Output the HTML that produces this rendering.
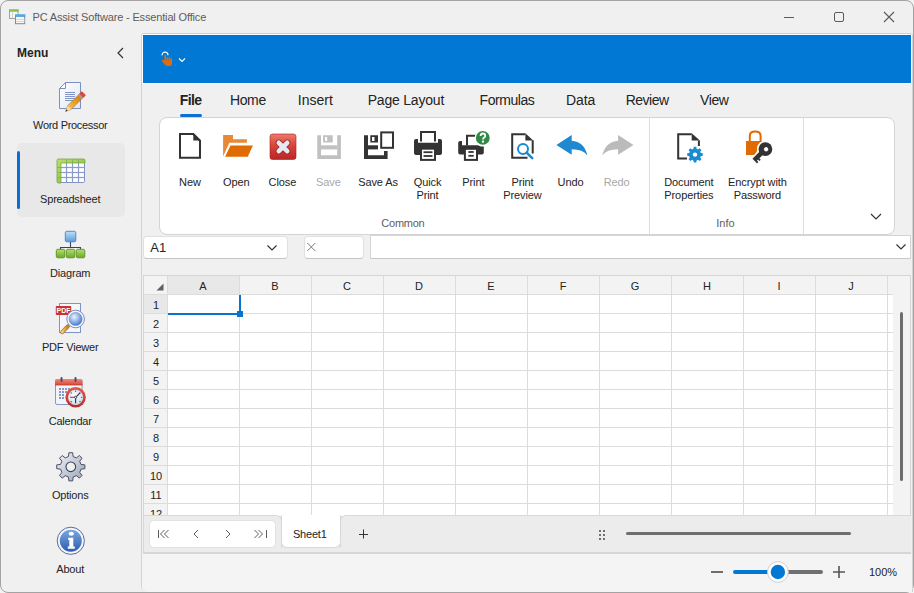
<!DOCTYPE html><html><head><meta charset="utf-8"><style>
html,body{margin:0;padding:0;width:914px;height:593px;overflow:hidden;background:#f2f2f2;}
body{position:relative;font-family:"Liberation Sans",sans-serif;}
.t{position:absolute;white-space:nowrap;}
svg{overflow:visible}
</style></head><body>
<div style="position:absolute;left:0px;top:0px;width:914px;height:593px;box-sizing:border-box;border:1px solid #a3a3a3;border-radius:8px;background:#f0f0f0;"></div>
<svg style="position:absolute;left:8px;top:8px" width="18" height="18" viewBox="0 0 18 18">
<defs><linearGradient id="tg1" x1="0" y1="0" x2="0" y2="1"><stop offset="0" stop-color="#a6d86a"/><stop offset="1" stop-color="#6cb030"/></linearGradient>
<linearGradient id="tg2" x1="0" y1="0" x2="0" y2="1"><stop offset="0" stop-color="#7cc4ec"/><stop offset="1" stop-color="#3a90cc"/></linearGradient></defs>
<rect x="1.5" y="1.5" width="8.5" height="9" fill="#f6f6f4" stroke="#a0a0a0" stroke-width="1"/>
<rect x="1" y="1" width="9.5" height="2.6" fill="url(#tg1)"/>
<line x1="4.5" y1="3.6" x2="4.5" y2="10" stroke="#d0d0d0" stroke-width="1"/>
<rect x="7.5" y="6.5" width="9.2" height="9.2" fill="#f6f6f4" stroke="#8a8a8a" stroke-width="1"/>
<rect x="7" y="6" width="10.2" height="2.8" fill="url(#tg2)"/>
<line x1="8" y1="11.5" x2="16.5" y2="11.5" stroke="#d8d8d8" stroke-width="1"/>
<line x1="8" y1="13.5" x2="16.5" y2="13.5" stroke="#d8d8d8" stroke-width="1"/>
</svg>
<div class="t" style="left:32.5px;top:11.54px;font-size:11px;line-height:11px;color:#5c5c5c;letter-spacing:-0.16px;">PC Assist Software - Essential Office</div>
<div style="position:absolute;left:784px;top:17px;width:10px;height:1px;background:#5a5a5a;"></div>
<div style="position:absolute;left:834px;top:12px;width:10px;height:10px;box-sizing:border-box;border:1px solid #5a5a5a;border-radius:2px;"></div>
<svg style="position:absolute;left:883px;top:11px" width="12" height="12" viewBox="0 0 12 12"><path d="M1 1 L11 11 M11 1 L1 11" stroke="#5a5a5a" stroke-width="1.1" fill="none"/></svg>
<div class="t" style="left:17px;top:46.68px;font-size:12px;line-height:12px;color:#232323;font-weight:700;">Menu</div>
<svg style="position:absolute;left:116px;top:47px" width="9" height="12" viewBox="0 0 9 12"><path d="M7 1 L2 6 L7 11" stroke="#333" stroke-width="1.2" fill="none"/></svg>
<div style="position:absolute;left:17px;top:143px;width:108px;height:74px;background:#e8e8e8;border-radius:5px;"></div>
<div style="position:absolute;left:17px;top:151px;width:3px;height:58px;background:#0a70d6;border-radius:2px;"></div>
<div class="t" style="left:10.20px;width:120px;text-align:center;top:119.54px;font-size:11px;line-height:11px;color:#232323;letter-spacing:-0.32px;">Word Processor</div>
<div class="t" style="left:10.20px;width:120px;text-align:center;top:193.54px;font-size:11px;line-height:11px;color:#232323;letter-spacing:-0.2px;">Spreadsheet</div>
<div class="t" style="left:10.20px;width:120px;text-align:center;top:267.54px;font-size:11px;line-height:11px;color:#232323;letter-spacing:-0.2px;">Diagram</div>
<div class="t" style="left:10.20px;width:120px;text-align:center;top:341.54px;font-size:11px;line-height:11px;color:#232323;letter-spacing:-0.2px;">PDF Viewer</div>
<div class="t" style="left:10.20px;width:120px;text-align:center;top:415.54px;font-size:11px;line-height:11px;color:#232323;letter-spacing:-0.2px;">Calendar</div>
<div class="t" style="left:10.20px;width:120px;text-align:center;top:489.54px;font-size:11px;line-height:11px;color:#232323;letter-spacing:-0.2px;">Options</div>
<div class="t" style="left:10.20px;width:120px;text-align:center;top:563.54px;font-size:11px;line-height:11px;color:#232323;letter-spacing:-0.2px;">About</div>
<svg style="position:absolute;left:52px;top:78px" width="40" height="38" viewBox="0 0 40 38">
<defs><linearGradient id="wpg" x1="0" y1="0" x2="1" y2="1"><stop offset="0" stop-color="#ffffff"/><stop offset="1" stop-color="#dfe6f3"/></linearGradient>
<linearGradient id="pen" x1="0" y1="0" x2="1" y2="0"><stop offset="0" stop-color="#f8d070"/><stop offset="0.5" stop-color="#f0a020"/><stop offset="1" stop-color="#c87010"/></linearGradient></defs>
<path d="M13.5 4.5 H28.5 V30.5 H7.5 V10.5 Z" fill="url(#wpg)" stroke="#7d90c4" stroke-width="1"/>
<path d="M7.5 10.5 L13.5 4.5 V10.5 Z" fill="#fff" stroke="#7d90c4" stroke-width="1"/>
<g stroke="#8496c8" stroke-width="1"><line x1="13" y1="14.5" x2="23" y2="14.5"/><line x1="13" y1="16.5" x2="23" y2="16.5"/><line x1="13" y1="18.5" x2="23" y2="18.5"/><line x1="13" y1="20.5" x2="23" y2="20.5"/><line x1="13" y1="22.5" x2="23" y2="22.5"/></g>
<g transform="translate(13.6,33.4) rotate(-45)">
<path d="M0 0 L5.5 -2.6 H25 V2.6 H5.5 Z" fill="url(#pen)" stroke="#9a6818" stroke-width="0.5"/>
<path d="M0 0 L5.5 -2.6 V2.6 Z" fill="#f3d9b0"/>
<path d="M0 0 L2 -0.95 V0.95 Z" fill="#333"/>
<rect x="20" y="-2.6" width="2.2" height="5.2" fill="#8aa0c8"/>
<rect x="22.2" y="-2.8" width="3.6" height="5.6" fill="#d84848" rx="0.8"/>
</g>
</svg>
<svg style="position:absolute;left:56px;top:158px" width="30" height="26" viewBox="0 0 30 26">
<defs><linearGradient id="ssg" x1="0" y1="0" x2="1" y2="1"><stop offset="0" stop-color="#b8e070"/><stop offset="1" stop-color="#84b840"/></linearGradient></defs>
<rect x="1.5" y="1.5" width="27" height="23" rx="1.2" fill="#fff" stroke="#8092c4" stroke-width="1"/>
<path d="M1 2.5 Q1 1 2.5 1 H27.5 Q29 1 29 2.5 V5 H5 V25 H2.5 Q1 25 1 23.5 Z" fill="url(#ssg)" stroke="#6c9e34" stroke-width="0.7"/>
<g stroke="#8a9ccc" stroke-width="1.2" fill="none">
<line x1="10.5" y1="5" x2="10.5" y2="24.5"/><line x1="16.5" y1="5" x2="16.5" y2="24.5"/><line x1="22.5" y1="5" x2="22.5" y2="24.5"/>
<line x1="5" y1="9.5" x2="28.5" y2="9.5"/><line x1="5" y1="14.5" x2="28.5" y2="14.5"/><line x1="5" y1="19.5" x2="28.5" y2="19.5"/>
</g>
<g stroke="#78a840" stroke-width="0.7"><line x1="10.5" y1="1.5" x2="10.5" y2="5"/><line x1="16.5" y1="1.5" x2="16.5" y2="5"/><line x1="22.5" y1="1.5" x2="22.5" y2="5"/>
<line x1="1.5" y1="9.5" x2="5" y2="9.5"/><line x1="1.5" y1="14.5" x2="5" y2="14.5"/><line x1="1.5" y1="19.5" x2="5" y2="19.5"/></g>
</svg>
<svg style="position:absolute;left:52px;top:228px" width="36" height="34" viewBox="0 0 36 34">
<defs><linearGradient id="dgb" x1="0" y1="0" x2="0" y2="1"><stop offset="0" stop-color="#bfe0fa"/><stop offset="1" stop-color="#5c9ad8"/></linearGradient>
<linearGradient id="dgg" x1="0" y1="0" x2="0" y2="1"><stop offset="0" stop-color="#b4e070"/><stop offset="1" stop-color="#6aa826"/></linearGradient></defs>
<rect x="13.3" y="3.3" width="10.5" height="10.5" rx="1.5" fill="url(#dgb)" stroke="#4a80c4" stroke-width="0.9"/>
<path d="M18.5 14 V20 M8.5 21.5 V19.5 H28.5 V21.5" stroke="#334466" stroke-width="1.1" fill="none"/>
<rect x="4.3" y="21.3" width="8.5" height="8.5" rx="1.5" fill="url(#dgg)" stroke="#5a9022" stroke-width="0.9"/>
<rect x="14.3" y="21.3" width="8.5" height="8.5" rx="1.5" fill="url(#dgg)" stroke="#5a9022" stroke-width="0.9"/>
<rect x="24.3" y="21.3" width="8.5" height="8.5" rx="1.5" fill="url(#dgg)" stroke="#5a9022" stroke-width="0.9"/>
</svg>
<svg style="position:absolute;left:52px;top:300px" width="36" height="36" viewBox="0 0 36 36">
<defs><radialGradient id="lens" cx="0.4" cy="0.35" r="0.7"><stop offset="0" stop-color="#eef4ff"/><stop offset="0.45" stop-color="#9cbcec"/><stop offset="1" stop-color="#3f74c8"/></radialGradient>
<linearGradient id="hdl" x1="0" y1="0" x2="1" y2="0"><stop offset="0" stop-color="#f4d27a"/><stop offset="1" stop-color="#c8801c"/></linearGradient></defs>
<rect x="7.5" y="3.5" width="21" height="29" fill="#f4f6fb" stroke="#8194c6" stroke-width="1"/>
<rect x="3.8" y="6" width="15.4" height="9" rx="1" fill="#c83232"/>
<text x="11.5" y="13.4" font-family="Liberation Sans" font-weight="700" font-size="7" fill="#fff" text-anchor="middle">PDF</text>
<path d="M10.2 32.2 L15.8 26.4" stroke="#b87020" stroke-width="4" stroke-linecap="round"/>
<path d="M10.2 32.2 L15.8 26.4" stroke="url(#hdl)" stroke-width="2.6" stroke-linecap="round"/>
<circle cx="23.6" cy="19" r="8.8" fill="#fbfcff" stroke="#7a88b8" stroke-width="1"/>
<circle cx="23.6" cy="19" r="6.6" fill="url(#lens)" stroke="#6a84c0" stroke-width="0.6"/>
</svg>
<svg style="position:absolute;left:52px;top:374px" width="36" height="36" viewBox="0 0 36 36">
<defs><radialGradient id="clk" cx="0.45" cy="0.4" r="0.6"><stop offset="0" stop-color="#ffffff"/><stop offset="1" stop-color="#cddcf0"/></radialGradient>
<linearGradient id="calh" x1="0" y1="0" x2="0" y2="1"><stop offset="0" stop-color="#f08a78"/><stop offset="1" stop-color="#d8483a"/></linearGradient>
<linearGradient id="ring" x1="0" y1="0" x2="0" y2="1"><stop offset="0" stop-color="#e8584a"/><stop offset="1" stop-color="#b82a24"/></linearGradient></defs>
<rect x="3.5" y="5.5" width="26.5" height="25" rx="1.5" fill="#f2f4fa" stroke="#8898c8" stroke-width="1"/>
<path d="M3 7 Q3 5 5 5 H28.5 Q30.5 5 30.5 7 V11 H3 Z" fill="url(#calh)"/>
<rect x="3" y="10.6" width="27.5" height="0.8" fill="#c04030"/>
<g fill="#8696c8"><rect x="7" y="14" width="2" height="2"/><rect x="10" y="14" width="2" height="2"/><rect x="13" y="14" width="2" height="2"/><rect x="16" y="14" width="2" height="2"/>
<rect x="7" y="17" width="2" height="2"/><rect x="10" y="17" width="2" height="2"/><rect x="13" y="17" width="2" height="2"/>
<rect x="7" y="20" width="2" height="2"/><rect x="10" y="20" width="2" height="2"/>
<rect x="7" y="23" width="2" height="2"/><rect x="10" y="23" width="2" height="2"/></g>
<rect x="8.5" y="3" width="2" height="5" rx="1" fill="#4a4f60" /><rect x="22.5" y="3" width="2" height="5" rx="1" fill="#4a4f60"/>
<circle cx="23.6" cy="23.3" r="10.2" fill="url(#ring)"/>
<circle cx="23.6" cy="23.3" r="7.6" fill="url(#clk)"/>
<g fill="#334"><circle cx="19.2" cy="18.9" r="0.6"/><circle cx="28" cy="18.9" r="0.6"/><circle cx="19.2" cy="27.7" r="0.6"/><circle cx="28" cy="27.7" r="0.6"/><circle cx="23.6" cy="17.2" r="0.6"/><circle cx="29.7" cy="23.3" r="0.6"/></g>
<path d="M23.6 23.3 L18 23.3" stroke="#d03030" stroke-width="1.1"/>
<path d="M23.6 23.3 V29.3 M23.6 23.3 L28 18.9" stroke="#2a3040" stroke-width="1.1"/>
<circle cx="23.6" cy="23.3" r="1.1" fill="#fff" stroke="#2a3040" stroke-width="0.8"/>
</svg>
<svg style="position:absolute;left:52px;top:448px" width="38" height="38" viewBox="0 0 38 38">
<defs><linearGradient id="gg" x1="0" y1="0" x2="1" y2="1"><stop offset="0" stop-color="#f0f2f6"/><stop offset="1" stop-color="#9aa4b8"/></linearGradient></defs>
<path d="M16.46 8.56 L16.89 4.73 L20.71 4.73 L21.14 8.56 L24.38 9.91 L27.40 7.50 L30.10 10.20 L27.69 13.22 L29.04 16.46 L32.87 16.89 L32.87 20.71 L29.04 21.14 L27.69 24.38 L30.10 27.40 L27.40 30.10 L24.38 27.69 L21.14 29.04 L20.71 32.87 L16.89 32.87 L16.46 29.04 L13.22 27.69 L10.20 30.10 L7.50 27.40 L9.91 24.38 L8.56 21.14 L4.73 20.71 L4.73 16.89 L8.56 16.46 L9.91 13.22 L7.50 10.20 L10.20 7.50 L13.22 9.91 Z" fill="url(#gg)" stroke="#4a5068" stroke-width="1" stroke-linejoin="round"/>
<circle cx="18.8" cy="18.8" r="4.8" fill="#f0f0f0" stroke="#3a4058" stroke-width="1.1"/>
</svg>
<svg style="position:absolute;left:52px;top:522px" width="38" height="38" viewBox="0 0 38 38">
<defs><linearGradient id="ib" x1="0" y1="0" x2="0" y2="1"><stop offset="0" stop-color="#7aa6e0"/><stop offset="1" stop-color="#2d5cb0"/></linearGradient></defs>
<circle cx="18.8" cy="18.8" r="13.6" fill="#f4f6fa" stroke="#5a6aa0" stroke-width="1"/>
<circle cx="18.8" cy="18.8" r="11" fill="url(#ib)"/>
<ellipse cx="19.3" cy="11.8" rx="2.6" ry="2" fill="#fff"/>
<path d="M16.2 15.8 H21.3 V24.5 H22.8 V26.8 H15.8 V24.5 H17.3 V18 H16.2 Z" fill="#fff"/>
</svg>
<div style="position:absolute;left:141px;top:33px;width:772px;height:559px;box-sizing:border-box;border:1px solid #d2d2d2;border-bottom:none;border-radius:3px 3px 0 6px;background:#f0f0f0;"></div>
<div style="position:absolute;left:142px;top:34px;width:770px;height:50px;background:#ffffff;border-radius:2px 2px 0 0;"></div>
<div style="position:absolute;left:143px;top:35px;width:768px;height:48px;background:#0078d4;"></div>
<svg style="position:absolute;left:155px;top:45px" width="35" height="25" viewBox="0 0 35 25">
<path d="M7 10.2 A3 3 0 0 1 13 10.2" stroke="#fff" stroke-width="1.2" fill="none"/>
<g fill="#e06a10">
<rect x="9.4" y="9.8" width="1.7" height="8" rx="0.85"/>
<rect x="11.6" y="12" width="1.5" height="6" rx="0.75"/>
<rect x="13.6" y="12" width="1.5" height="6" rx="0.75"/>
<rect x="15.5" y="13" width="1.5" height="6" rx="0.75"/>
<path d="M9.4 15 H17 V18.5 Q17 21 14.5 21 H12.2 Q11 21 10.2 20 L6.9 16.3 Q6.4 15.4 7.4 15.1 Q8.3 14.9 9.4 16 Z"/>
</g>
</svg>
<svg style="position:absolute;left:177px;top:56px" width="10" height="8" viewBox="0 0 10 8"><path d="M2 2.5 L5 5.5 L8 2.5" stroke="#fff" stroke-width="1.1" fill="none"/></svg>
<div class="t" style="left:179.8px;top:92.96px;font-size:14px;line-height:14px;color:#232323;font-weight:700;letter-spacing:-0.6px;">File</div>
<div style="position:absolute;left:180px;top:114px;width:22px;height:3px;background:#0a70d6;border-radius:2px;"></div>
<div class="t" style="left:229.9px;top:92.96px;font-size:14px;line-height:14px;color:#232323;letter-spacing:-0.35px;">Home</div>
<div class="t" style="left:297.8px;top:92.96px;font-size:14px;line-height:14px;color:#232323;">Insert</div>
<div class="t" style="left:367.7px;top:92.96px;font-size:14px;line-height:14px;color:#232323;letter-spacing:-0.2px;">Page Layout</div>
<div class="t" style="left:479.6px;top:92.96px;font-size:14px;line-height:14px;color:#232323;letter-spacing:-0.45px;">Formulas</div>
<div class="t" style="left:566px;top:92.96px;font-size:14px;line-height:14px;color:#232323;letter-spacing:-0.1px;">Data</div>
<div class="t" style="left:625.7px;top:92.96px;font-size:14px;line-height:14px;color:#232323;letter-spacing:-0.5px;">Review</div>
<div class="t" style="left:699.9px;top:92.96px;font-size:14px;line-height:14px;color:#232323;letter-spacing:-0.35px;">View</div>
<div style="position:absolute;left:159px;top:117px;width:736px;height:118px;box-sizing:border-box;background:#fff;border:1px solid #d4d4d4;border-radius:8px;"></div>
<div style="position:absolute;left:649px;top:118px;width:1px;height:116px;background:#dedede;"></div>
<div style="position:absolute;left:803px;top:118px;width:1px;height:116px;background:#dedede;"></div>
<div class="t" style="left:362.90px;width:80px;text-align:center;top:217.54px;font-size:11px;line-height:11px;color:#606060;letter-spacing:-0.25px;">Common</div>
<div class="t" style="left:705.40px;width:40px;text-align:center;top:217.54px;font-size:11px;line-height:11px;color:#606060;">Info</div>
<svg style="position:absolute;left:869px;top:211px" width="14" height="10" viewBox="0 0 14 10"><path d="M2 3 L7 8 L12 3" stroke="#333" stroke-width="1.2" fill="none"/></svg>
<div class="t" style="left:144.90px;width:90px;text-align:center;top:176.54px;font-size:11px;line-height:11px;color:#232323;letter-spacing:-0.1px;">New</div>
<div class="t" style="left:191.20px;width:90px;text-align:center;top:176.54px;font-size:11px;line-height:11px;color:#232323;letter-spacing:-0.1px;">Open</div>
<div class="t" style="left:237.40px;width:90px;text-align:center;top:176.54px;font-size:11px;line-height:11px;color:#232323;letter-spacing:-0.1px;">Close</div>
<div class="t" style="left:283.40px;width:90px;text-align:center;top:176.54px;font-size:11px;line-height:11px;color:#a8a8a8;letter-spacing:-0.1px;">Save</div>
<div class="t" style="left:333.00px;width:90px;text-align:center;top:176.54px;font-size:11px;line-height:11px;color:#232323;letter-spacing:-0.1px;">Save As</div>
<div class="t" style="left:382.50px;width:90px;text-align:center;top:176.54px;font-size:11px;line-height:11px;color:#232323;letter-spacing:-0.1px;">Quick</div>
<div class="t" style="left:382.50px;width:90px;text-align:center;top:189.54px;font-size:11px;line-height:11px;color:#232323;letter-spacing:-0.1px;">Print</div>
<div class="t" style="left:428.30px;width:90px;text-align:center;top:176.54px;font-size:11px;line-height:11px;color:#232323;letter-spacing:-0.1px;">Print</div>
<div class="t" style="left:477.50px;width:90px;text-align:center;top:176.54px;font-size:11px;line-height:11px;color:#232323;letter-spacing:-0.1px;">Print</div>
<div class="t" style="left:477.50px;width:90px;text-align:center;top:189.54px;font-size:11px;line-height:11px;color:#232323;letter-spacing:-0.1px;">Preview</div>
<div class="t" style="left:525.50px;width:90px;text-align:center;top:176.54px;font-size:11px;line-height:11px;color:#232323;letter-spacing:-0.1px;">Undo</div>
<div class="t" style="left:571.60px;width:90px;text-align:center;top:176.54px;font-size:11px;line-height:11px;color:#a8a8a8;letter-spacing:-0.1px;">Redo</div>
<div class="t" style="left:643.90px;width:90px;text-align:center;top:176.54px;font-size:11px;line-height:11px;color:#232323;letter-spacing:-0.1px;">Document</div>
<div class="t" style="left:643.90px;width:90px;text-align:center;top:189.54px;font-size:11px;line-height:11px;color:#232323;letter-spacing:-0.1px;">Properties</div>
<div class="t" style="left:712.40px;width:90px;text-align:center;top:176.54px;font-size:11px;line-height:11px;color:#232323;letter-spacing:-0.1px;">Encrypt with</div>
<div class="t" style="left:712.40px;width:90px;text-align:center;top:189.54px;font-size:11px;line-height:11px;color:#232323;letter-spacing:-0.1px;">Password</div>
<svg style="position:absolute;left:176px;top:130px" width="28" height="32" viewBox="0 0 28 32">
<path d="M4 4 H17.3 L24 10.7 V27.7 H4 Z" fill="#fff" stroke="#333" stroke-width="2" stroke-linejoin="miter"/>
<path d="M17.3 3 V10.4 H25 Z" fill="#333"/>
</svg>
<svg style="position:absolute;left:220px;top:130px" width="36" height="30" viewBox="0 0 36 30">
<path d="M3.1 5 H13 V9.2 H26.9 V12.8 H9.4 L3.3 26 H3.1 Z" fill="#e8893a"/>
<path d="M10.5 15.4 H32.9 L27.8 26.7 H5.1 Z" fill="#e06b00"/>
</svg>
<svg style="position:absolute;left:268px;top:132px" width="30" height="30" viewBox="0 0 30 30">
<defs><linearGradient id="cg" x1="0" y1="0" x2="0" y2="1"><stop offset="0" stop-color="#ec7a6c"/><stop offset="0.45" stop-color="#d9453a"/><stop offset="1" stop-color="#b92626"/></linearGradient></defs>
<rect x="2" y="2" width="26" height="25.5" rx="2.5" fill="url(#cg)" stroke="#a82020" stroke-width="0.6"/>
<path d="M10.8 10.8 L19.2 19.2 M19.2 10.8 L10.8 19.2" stroke="#a82a24" stroke-width="6.4" stroke-linecap="round"/>
<path d="M10.8 10.8 L19.2 19.2 M19.2 10.8 L10.8 19.2" stroke="#e4eaf4" stroke-width="4.6" stroke-linecap="round"/>
</svg>
<svg style="position:absolute;left:316px;top:134px" width="26" height="26" viewBox="0 0 26 26">
<path d="M1.3 1.2 H5 V21.2 H21.2 V1.2 H24.9 V25 H1.3 Z" fill="#c0c0c0"/>
<rect x="5" y="11.3" width="16.2" height="4.1" fill="#c0c0c0"/>
<path d="M7.1 1.2 H16.7 V8.6 H7.1 Z M9 3.1 V7 H11.2 V3.1 Z" fill="#c0c0c0" fill-rule="evenodd"/>
</svg>
<svg style="position:absolute;left:362px;top:130px" width="34" height="30" viewBox="0 0 34 30">
<path d="M2 5.2 H6 V25.2 H22 V21.1 H25.6 V29 H2 Z" fill="#333"/>
<rect x="6" y="15.3" width="10" height="4.1" fill="#333"/>
<path d="M8.3 5.2 H16 V12.6 H8.3 Z M10 7.1 V11 H12.5 V7.1 Z" fill="#333" fill-rule="evenodd"/>
<rect x="19.2" y="2.4" width="11.8" height="15.4" fill="#fff" stroke="#333" stroke-width="2"/>
</svg>
<svg style="position:absolute;left:412px;top:129px" width="32" height="34" viewBox="0 0 32 34">
<path d="M9 12.5 V3 H23 V12.5" fill="none" stroke="#333" stroke-width="2"/>
<path d="M4 10 H6 V13.8 H26 V10 H28 Q30 10 30 12 V24 Q30 26 28 26 H4 Q2 26 2 24 V12 Q2 10 4 10 Z" fill="#333"/>
<rect x="9" y="19.7" width="14" height="11.2" fill="#fff" stroke="#333" stroke-width="2"/>
<rect x="11.5" y="22.3" width="9" height="1.8" fill="#333"/><rect x="11.5" y="26.1" width="9" height="1.8" fill="#333"/>
</svg>
<svg style="position:absolute;left:456px;top:128px" width="36" height="36" viewBox="0 0 36 36">
<path d="M11 17.5 V7.7 H22.2" fill="none" stroke="#333" stroke-width="2"/>
<path d="M4.2 13.1 H6 V17.2 H22 L25 18.5 H27.8 V24.5 Q27.8 26.5 25.8 26.5 H4.2 Q2.2 26.5 2.2 24.5 V15.1 Q2.2 13.1 4.2 13.1 Z" fill="#333"/>
<rect x="8.9" y="20.8" width="12.1" height="11.1" fill="#fff" stroke="#333" stroke-width="2"/>
<rect x="12.4" y="23.1" width="5.3" height="1.8" fill="#333"/><rect x="12.4" y="26.9" width="5.3" height="1.8" fill="#333"/>
<circle cx="26.8" cy="9.9" r="8.1" fill="#fff"/>
<circle cx="26.8" cy="9.9" r="6.9" fill="#2f8a47"/>
<path d="M24.6 8.1 Q24.6 5.5 26.9 5.5 Q29.2 5.5 29.2 7.7 Q29.2 9.1 27.9 9.8 Q27 10.3 27 11.6" fill="none" stroke="#fff" stroke-width="1.8"/>
<rect x="26" y="12.6" width="2" height="2" fill="#fff"/>
</svg>
<svg style="position:absolute;left:508px;top:130px" width="28" height="32" viewBox="0 0 28 32">
<path d="M17.3 4.2 H4.2 V27.7 H19.5 M24.7 23.5 V10.2" fill="none" stroke="#333" stroke-width="2"/>
<path d="M17.4 3.2 V10.4 H25.2 Z" fill="#333"/>
<circle cx="15" cy="19" r="5" fill="none" stroke="#1a8ad4" stroke-width="2"/>
<path d="M18.6 22.6 L24.2 28.2" stroke="#1a8ad4" stroke-width="2.6" stroke-linecap="round"/>
</svg>
<svg style="position:absolute;left:554px;top:132px" width="36" height="26" viewBox="0 0 36 26">
<path d="M2.4 12.9 L17.7 3.1 V8.8 Q30 9.5 33.4 23.4 Q29 17.2 17.7 17.2 V22.8 Z" fill="#1e88d0"/>
</svg>
<svg style="position:absolute;left:600px;top:132px" width="36" height="26" viewBox="0 0 36 26">
<path d="M33.5 12.9 L18.1 3.1 V8.8 Q5.8 9.5 2.2 23.4 Q6.8 17.2 18.1 17.2 V22.8 Z" fill="#bbbbbb"/>
</svg>
<svg style="position:absolute;left:675px;top:130px" width="32" height="36" viewBox="0 0 32 36">
<path d="M16.7 4.2 H3.2 V28.5 H12 M23.9 16 V10.4" fill="none" stroke="#333" stroke-width="2"/>
<path d="M16.7 3.2 V10.4 H24.9 Z" fill="#333"/>
<path d="M18.40 18.82 L18.73 16.80 L21.27 16.80 L21.60 18.82 L22.96 19.38 L24.61 18.19 L26.41 19.99 L25.22 21.64 L25.78 23.00 L27.80 23.33 L27.80 25.87 L25.78 26.20 L25.22 27.56 L26.41 29.21 L24.61 31.01 L22.96 29.82 L21.60 30.38 L21.27 32.40 L18.73 32.40 L18.40 30.38 L17.04 29.82 L15.39 31.01 L13.59 29.21 L14.78 27.56 L14.22 26.20 L12.20 25.87 L12.20 23.33 L14.22 23.00 L14.78 21.64 L13.59 19.99 L15.39 18.19 L17.04 19.38 Z" fill="#1a8ad4" stroke="#fff" stroke-width="0"/>
<circle cx="20" cy="24.6" r="2.2" fill="#fff"/>
</svg>
<svg style="position:absolute;left:742px;top:128px" width="34" height="38" viewBox="0 0 34 38">
<path d="M7.8 13 V8 Q7.8 3.6 13.2 3.6 Q18.6 3.6 18.6 8 V13" fill="none" stroke="#e06b00" stroke-width="2"/>
<path d="M4 13 H20.4 V17.5 Q16 18 15 23 L12.6 26.9 H4 Z" fill="#e06b00"/>
<g transform="translate(23.4,21.1) rotate(135)">
<path d="M0 -7 A7 7 0 1 1 0 7 A7 7 0 1 1 0 -7 Z M3 -2.3 H16.5 V2.3 H3 Z M11 -2.3 V-4.3 H13 V-2.3 Z M14.3 -2.3 V-4.3 H16.5 V-2.3 Z" fill="#fff" stroke="#fff" stroke-width="3" stroke-linejoin="round"/>
<circle cx="0" cy="0" r="6.9" fill="#333"/>
<path d="M3 -2.3 H16 V2.3 H3 Z M10.8 -2.3 V-4.2 H12.6 V-2.3 Z M14.2 -2.3 V-4.2 H16 V-2.3 Z" fill="#333"/>
<circle cx="-0.4" cy="-0.6" r="2.2" fill="#fff"/>
</g>
</svg>
<div style="position:absolute;left:143px;top:236px;width:145px;height:23px;box-sizing:border-box;background:#fff;border:1px solid #e0e0e0;border-bottom-color:#c4c4c4;border-radius:4px;"></div>
<div class="t" style="left:150.3px;top:241.32px;font-size:13px;line-height:13px;color:#232323;">A1</div>
<svg style="position:absolute;left:265px;top:243px" width="14" height="10" viewBox="0 0 14 10"><path d="M2.5 2.5 L7 7 L11.5 2.5" stroke="#333" stroke-width="1.2" fill="none"/></svg>
<div style="position:absolute;left:304px;top:236px;width:60px;height:23px;box-sizing:border-box;background:#fff;border:1px solid #e0e0e0;border-bottom-color:#c4c4c4;border-radius:4px;"></div>
<svg style="position:absolute;left:305px;top:241px" width="14" height="14" viewBox="0 0 14 14"><path d="M2.3 2 L10.3 10 M10.3 2 L2.3 10" stroke="#7a7a7a" stroke-width="1" fill="none"/></svg>
<div style="position:absolute;left:370px;top:235px;width:541px;height:24px;box-sizing:border-box;background:#fff;border:1px solid #d4d4d4;border-bottom-color:#c8c8c8;border-radius:1px;"></div>
<svg style="position:absolute;left:894px;top:242px" width="14" height="10" viewBox="0 0 14 10"><path d="M2.5 2.5 L7 7 L11.5 2.5" stroke="#333" stroke-width="1.2" fill="none"/></svg>
<div style="position:absolute;left:143px;top:275px;width:768px;height:241px;box-sizing:border-box;background:#fff;border:1px solid #d6d6d6;border-bottom:none;"></div>
<div style="position:absolute;left:144px;top:276px;width:766px;height:18px;background:#f3f3f3;"></div>
<div style="position:absolute;left:144px;top:294px;width:23px;height:222px;background:#f3f3f3;"></div>
<div style="position:absolute;left:168px;top:276px;width:71px;height:18px;background:#e8e8e8;"></div>
<div style="position:absolute;left:144px;top:294px;width:23px;height:19px;background:#e8e8e8;"></div>
<div style="position:absolute;left:893px;top:294px;width:17px;height:222px;background:#f3f3f3;"></div>
<div style="position:absolute;left:900px;top:312px;width:3px;height:169px;background:#6e6e6e;border-radius:2px;"></div>
<div style="position:absolute;left:167px;top:276px;width:1px;height:240px;background:#dcdcdc;"></div>
<div style="position:absolute;left:239px;top:276px;width:1px;height:240px;background:#dcdcdc;"></div>
<div style="position:absolute;left:311px;top:276px;width:1px;height:240px;background:#dcdcdc;"></div>
<div style="position:absolute;left:383px;top:276px;width:1px;height:240px;background:#dcdcdc;"></div>
<div style="position:absolute;left:455px;top:276px;width:1px;height:240px;background:#dcdcdc;"></div>
<div style="position:absolute;left:527px;top:276px;width:1px;height:240px;background:#dcdcdc;"></div>
<div style="position:absolute;left:599px;top:276px;width:1px;height:240px;background:#dcdcdc;"></div>
<div style="position:absolute;left:671px;top:276px;width:1px;height:240px;background:#dcdcdc;"></div>
<div style="position:absolute;left:743px;top:276px;width:1px;height:240px;background:#dcdcdc;"></div>
<div style="position:absolute;left:815px;top:276px;width:1px;height:240px;background:#dcdcdc;"></div>
<div style="position:absolute;left:887px;top:276px;width:1px;height:240px;background:#dcdcdc;"></div>
<div style="position:absolute;left:887px;top:276px;width:1px;height:18px;background:#dcdcdc;"></div>
<div style="position:absolute;left:144px;top:294px;width:749px;height:1px;background:#dcdcdc;"></div>
<div style="position:absolute;left:144px;top:313px;width:749px;height:1px;background:#dcdcdc;"></div>
<div style="position:absolute;left:144px;top:332px;width:749px;height:1px;background:#dcdcdc;"></div>
<div style="position:absolute;left:144px;top:351px;width:749px;height:1px;background:#dcdcdc;"></div>
<div style="position:absolute;left:144px;top:370px;width:749px;height:1px;background:#dcdcdc;"></div>
<div style="position:absolute;left:144px;top:389px;width:749px;height:1px;background:#dcdcdc;"></div>
<div style="position:absolute;left:144px;top:408px;width:749px;height:1px;background:#dcdcdc;"></div>
<div style="position:absolute;left:144px;top:427px;width:749px;height:1px;background:#dcdcdc;"></div>
<div style="position:absolute;left:144px;top:446px;width:749px;height:1px;background:#dcdcdc;"></div>
<div style="position:absolute;left:144px;top:465px;width:749px;height:1px;background:#dcdcdc;"></div>
<div style="position:absolute;left:144px;top:484px;width:749px;height:1px;background:#dcdcdc;"></div>
<div style="position:absolute;left:144px;top:503px;width:749px;height:1px;background:#dcdcdc;"></div>
<svg style="position:absolute;left:155px;top:282px" width="10" height="10" viewBox="0 0 10 10"><path d="M8.5 1.5 V8.5 H1.5 Z" fill="#606060"/></svg>
<div class="t" style="left:183.00px;width:40px;text-align:center;top:280.54px;font-size:11px;line-height:11px;color:#232323;">A</div>
<div class="t" style="left:255.00px;width:40px;text-align:center;top:280.54px;font-size:11px;line-height:11px;color:#232323;">B</div>
<div class="t" style="left:327.00px;width:40px;text-align:center;top:280.54px;font-size:11px;line-height:11px;color:#232323;">C</div>
<div class="t" style="left:399.00px;width:40px;text-align:center;top:280.54px;font-size:11px;line-height:11px;color:#232323;">D</div>
<div class="t" style="left:471.00px;width:40px;text-align:center;top:280.54px;font-size:11px;line-height:11px;color:#232323;">E</div>
<div class="t" style="left:543.00px;width:40px;text-align:center;top:280.54px;font-size:11px;line-height:11px;color:#232323;">F</div>
<div class="t" style="left:615.00px;width:40px;text-align:center;top:280.54px;font-size:11px;line-height:11px;color:#232323;">G</div>
<div class="t" style="left:687.00px;width:40px;text-align:center;top:280.54px;font-size:11px;line-height:11px;color:#232323;">H</div>
<div class="t" style="left:759.00px;width:40px;text-align:center;top:280.54px;font-size:11px;line-height:11px;color:#232323;">I</div>
<div class="t" style="left:831.00px;width:40px;text-align:center;top:280.54px;font-size:11px;line-height:11px;color:#232323;">J</div>
<div class="t" style="left:141.00px;width:30px;text-align:center;top:300.04px;font-size:11px;line-height:11px;color:#232323;">1</div>
<div class="t" style="left:141.00px;width:30px;text-align:center;top:319.04px;font-size:11px;line-height:11px;color:#232323;">2</div>
<div class="t" style="left:141.00px;width:30px;text-align:center;top:338.04px;font-size:11px;line-height:11px;color:#232323;">3</div>
<div class="t" style="left:141.00px;width:30px;text-align:center;top:357.04px;font-size:11px;line-height:11px;color:#232323;">4</div>
<div class="t" style="left:141.00px;width:30px;text-align:center;top:376.04px;font-size:11px;line-height:11px;color:#232323;">5</div>
<div class="t" style="left:141.00px;width:30px;text-align:center;top:395.04px;font-size:11px;line-height:11px;color:#232323;">6</div>
<div class="t" style="left:141.00px;width:30px;text-align:center;top:414.04px;font-size:11px;line-height:11px;color:#232323;">7</div>
<div class="t" style="left:141.00px;width:30px;text-align:center;top:433.04px;font-size:11px;line-height:11px;color:#232323;">8</div>
<div class="t" style="left:141.00px;width:30px;text-align:center;top:452.04px;font-size:11px;line-height:11px;color:#232323;">9</div>
<div class="t" style="left:141.00px;width:30px;text-align:center;top:471.04px;font-size:11px;line-height:11px;color:#232323;">10</div>
<div class="t" style="left:141.00px;width:30px;text-align:center;top:490.04px;font-size:11px;line-height:11px;color:#232323;">11</div>
<div class="t" style="left:141.00px;width:30px;text-align:center;top:509.04px;font-size:11px;line-height:11px;color:#232323;">12</div>
<div style="position:absolute;left:168px;top:313px;width:70px;height:2px;background:#0874d0;"></div>
<div style="position:absolute;left:239px;top:295px;width:2px;height:16px;background:#0874d0;"></div>
<div style="position:absolute;left:237px;top:311px;width:6px;height:6px;background:#0874d0;"></div>
<div style="position:absolute;left:143px;top:516px;width:768px;height:37px;background:#ececec;"></div>
<div style="position:absolute;left:143px;top:515px;width:139px;height:38px;box-sizing:border-box;background:#ececec;border:1px solid #d8d8d8;border-bottom:none;border-radius:2px 6px 0 0;"></div>
<div style="position:absolute;left:149px;top:520px;width:127px;height:28px;box-sizing:border-box;background:#fff;border:1px solid #e2e2e2;border-radius:5px;"></div>
<svg style="position:absolute;left:155px;top:527px" width="16" height="14" viewBox="0 0 16 14"><path d="M3.5 3 V11 M9.5 3 L5.5 7 L9.5 11 M13.5 3 L9.5 7 L13.5 11" stroke="#5e5e5e" stroke-width="1" fill="none"/></svg>
<svg style="position:absolute;left:190px;top:527px" width="12" height="14" viewBox="0 0 12 14"><path d="M8 3 L4 7 L8 11" stroke="#5e5e5e" stroke-width="1" fill="none"/></svg>
<svg style="position:absolute;left:222px;top:527px" width="12" height="14" viewBox="0 0 12 14"><path d="M4 3 L8 7 L4 11" stroke="#5e5e5e" stroke-width="1" fill="none"/></svg>
<svg style="position:absolute;left:252px;top:527px" width="16" height="14" viewBox="0 0 16 14"><path d="M2.5 3 L6.5 7 L2.5 11 M6.5 3 L10.5 7 L6.5 11 M14.5 3 V11" stroke="#5e5e5e" stroke-width="1" fill="none"/></svg>
<div style="position:absolute;left:340px;top:515px;width:571px;height:38px;box-sizing:border-box;background:#ececec;border:1px solid #d8d8d8;border-bottom:none;border-right:none;border-radius:6px 0 0 0;"></div>
<div style="position:absolute;left:281px;top:548px;width:60px;height:4px;background:#ececec;"></div>
<div style="position:absolute;left:281px;top:515px;width:60px;height:33px;box-sizing:border-box;background:#fff;border:1px solid #d8d8d8;border-top:none;border-radius:0 0 6px 6px;"></div>
<div class="t" style="left:279.80px;width:60px;text-align:center;top:528.54px;font-size:11px;line-height:11px;color:#232323;letter-spacing:-0.2px;">Sheet1</div>
<svg style="position:absolute;left:357px;top:527px" width="14" height="14" viewBox="0 0 14 14"><path d="M6.5 2.5 V11.5 M2 7.5 H11" stroke="#333" stroke-width="1" fill="none"/></svg>
<div style="position:absolute;left:599px;top:530px;width:2px;height:2px;background:#707070;"></div>
<div style="position:absolute;left:599px;top:534px;width:2px;height:2px;background:#707070;"></div>
<div style="position:absolute;left:599px;top:538px;width:2px;height:2px;background:#707070;"></div>
<div style="position:absolute;left:603px;top:530px;width:2px;height:2px;background:#707070;"></div>
<div style="position:absolute;left:603px;top:534px;width:2px;height:2px;background:#707070;"></div>
<div style="position:absolute;left:603px;top:538px;width:2px;height:2px;background:#707070;"></div>
<div style="position:absolute;left:626px;top:532px;width:225px;height:3px;background:#6e6e6e;border-radius:2px;"></div>
<div style="position:absolute;left:143px;top:552px;width:768px;height:2px;background:#d6d6d6;"></div>
<div style="position:absolute;left:142px;top:554px;width:770px;height:38px;background:#f4f4f4;border-radius:0 0 0 5px;"></div>
<div style="position:absolute;left:711px;top:571px;width:12px;height:2px;background:#6e6e6e;"></div>
<div style="position:absolute;left:733px;top:570px;width:46px;height:4px;background:#0078d4;border-radius:2px;"></div>
<div style="position:absolute;left:776px;top:570px;width:47px;height:4px;background:#707070;border-radius:2px;"></div>
<svg style="position:absolute;left:766px;top:561px" width="24" height="24" viewBox="0 0 24 24"><circle cx="11.9" cy="11" r="10.4" fill="#fff" stroke="#cfcfcf" stroke-width="1"/><circle cx="11.9" cy="11" r="7.2" fill="#0078d4"/></svg>
<svg style="position:absolute;left:831px;top:565px" width="16" height="14" viewBox="0 0 16 14"><path d="M8 1 V13 M2 7 H14" stroke="#555" stroke-width="1.6" fill="none"/></svg>
<div class="t" style="left:869px;top:566.54px;font-size:11px;line-height:11px;color:#232323;">100%</div>
</body></html>
